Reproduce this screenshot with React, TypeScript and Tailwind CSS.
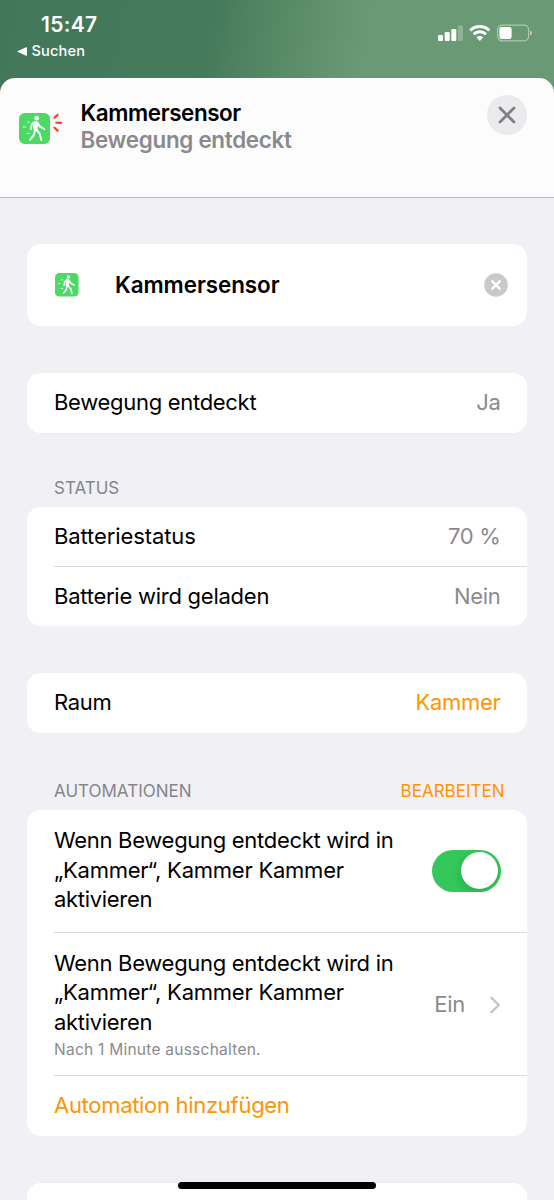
import React from 'react';

interface RowProps {
    label: React.ReactNode;
    children?: React.ReactNode;
}

/** Green motion-sensor tile with a walking figure. */
function MotionTile({ className }: { className?: string }) {
    return (
        <svg viewBox="0 0 93 93" className={className} fill="none" stroke="#fff" strokeLinecap="round" strokeLinejoin="round">
            <rect width="93" height="93" rx="17" fill="#4cd964" stroke="none" />
            <circle cx="53" cy="15.5" r="7" fill="#fff" stroke="none" />
            <path d="M45 27 L54 26 L57 33 L54 45 L55 52 L46 53 L44 45 Z" fill="#fff" strokeWidth="3" />
            <path d="M46 28 L38 34 L36 49" strokeWidth="5.5" />
            <path d="M56 29 L63 41 L76 48" strokeWidth="5.5" />
            <path d="M52 50 L62 62 L67 81" strokeWidth="6" />
            <path d="M48 53 L44 67 L33 80" strokeWidth="6" />
            <path d="M26 27h5M13 42h7M24 61h7" strokeWidth="3.5" strokeOpacity=".85" />
        </svg>
    );
}

function Card({ children, className = '' }: { children?: React.ReactNode; className?: string }) {
    return <div className={`mx-[27px] rounded-[14px] bg-white ${className}`}>{children}</div>;
}

function Row({ label, children }: RowProps) {
    return (
        <div className="flex h-[59.5px] items-center justify-between pr-[26.5px] pl-[27px]">
            <span>{label}</span>
            {children}
        </div>
    );
}

function Divider() {
    return <div className="-mt-px ml-[27px] h-px bg-[#d8d8da]" />;
}

function AutomationText() {
    return (
        <p className="leading-[29.4px]">
            Wenn Bewegung entdeckt wird in
            <br />
            <span className="tracking-[-0.24px]">„Kammer“, Kammer Kammer</span>
            <br />
            aktivieren
        </p>
    );
}

function StatusBar() {
    return (
        <div className="flex h-[78px] justify-between bg-[linear-gradient(100deg,#42775a_0%,#457a5a_38%,#5a8b68_52%,#6a9a75_66%,#6a9a75_100%)] text-white">
            <div className="pt-[11px]">
                <div className="ml-[41px] text-[21px] leading-[27px] font-semibold tracking-[0.3px]">15:47</div>
                <div className="mt-[4px] ml-[16.5px] flex items-center text-[14.6px] leading-[18px] font-medium tracking-[0.15px]">
                    <svg width="10" height="9" viewBox="0 0 10 9" className="mr-[5px]" fill="currentColor">
                        <path d="M0 4.5 9 .2Q10 0 10 1v7q0 1-1 .8Z" />
                    </svg>
                    Suchen
                </div>
            </div>
            <div className="mt-[24px] mr-[21.5px] flex gap-[5.5px]">
                <svg width="26" height="18" viewBox="0 0 26 18" fill="currentColor">
                    <rect x="0" y="11" width="5" height="6" rx="1.2" />
                    <rect x="6.7" y="8" width="5" height="9" rx="1.2" />
                    <rect x="13.3" y="5" width="5" height="12" rx="1.2" />
                    <rect x="20" y="1.5" width="5" height="15.5" rx="1.2" opacity=".25" />
                </svg>
                <svg width="22" height="18" viewBox="0 0 22 18" fill="none" stroke="currentColor" strokeWidth="3">
                    <path d="M1.2 6.4A13.8 13.8 0 0 1 20.4 6.4" />
                    <path d="M4.7 10.2A8.7 8.7 0 0 1 16.9 10.2" />
                    <path d="M7.3 13.2Q10.8 10.6 14.3 13.2L10.8 17Z" fill="currentColor" stroke="none" />
                </svg>
                <svg width="36" height="18" viewBox="0 0 36 18" fill="none">
                    <rect x=".6" y="1.2" width="31" height="15.6" rx="4.5" stroke="#fff" strokeOpacity=".45" strokeWidth="1.2" />
                    <rect x="2.4" y="3" width="12.2" height="12" rx="2.2" fill="#fff" />
                    <path d="M33 6.5q2 .7 2 2.5t-2 2.5Z" fill="#fff" fillOpacity=".5" />
                </svg>
            </div>
        </div>
    );
}

function SheetHeader() {
    return (
        <div className="-mt-[0.5px] flex h-[120px] items-start rounded-t-[15px] border-b border-[#bcbcc0] bg-[#fcfcfd]">
            <div className="mt-[35px] ml-[18.5px] flex w-[62px] shrink-0 items-start">
                <MotionTile className="size-[31px]" />
                <svg width="13" height="22" viewBox="0 0 13 22" className="ml-[2px]" fill="none" stroke="#ff3026" strokeWidth="2" strokeLinecap="round">
                    <path d="M2.4 4.8 5.7 1.8M4.2 9.8h5M2.4 14.6l3.3 3.2" />
                </svg>
            </div>
            <div className="pt-[21px] text-[22.4px] leading-[27px] font-semibold">
                <div className="tracking-[-0.4px]">Kammersensor</div>
                <div className="tracking-[-0.28px] text-[#8a8a8e]">Bewegung entdeckt</div>
            </div>
            <div className="mt-[17.5px] mr-[27px] ml-auto flex size-[40px] items-center justify-center rounded-full bg-[#ebebed]">
                <svg width="18" height="18" viewBox="0 0 18 18" stroke="#7f7f84" strokeWidth="2.8" strokeLinecap="round">
                    <path d="M2 2 16 16M16 2 2 16" />
                </svg>
            </div>
        </div>
    );
}

export default function App() {
    return (
        <div className="relative h-[1200px] w-[554px] overflow-hidden bg-[#f0f0f5] font-['Inter',sans-serif] text-[22px] tracking-[-0.3px] text-black">
            <div className="bg-[linear-gradient(90deg,#42775a,#42775a_50%,#6a9a75_50%)]">
                <StatusBar />
                <SheetHeader />
            </div>

            <Card className="mt-[46.5px] flex h-[82px] items-center pr-[19.5px] pl-[28px]">
                <MotionTile className="size-[23.5px]" />
                <span className="ml-[36.5px] text-[22.4px] font-semibold tracking-[-0.05px]">Kammersensor</span>
                <svg width="24" height="24" viewBox="0 0 24 24" className="ml-auto" strokeLinecap="round">
                    <circle cx="12" cy="12" r="11.8" fill="#c9c9cb" />
                    <path d="m8.3 8.3 7.4 7.4m0-7.4-7.4 7.4" stroke="#fff" strokeWidth="2.4" />
                </svg>
            </Card>

            <Card className="mt-[47px]">
                <Row label="Bewegung entdeckt">
                    <span className="text-[#8a8a8e]">Ja</span>
                </Row>
            </Card>

            <div className="mt-[44px] ml-[54px] h-[30.5px] text-[17px] leading-[22px] tracking-[0px] text-[#85858b]">STATUS</div>
            <Card>
                <Row label={<span className="tracking-[-0.1px]">Batteriestatus</span>}>
                    <span className="text-[#8a8a8e]">70 %</span>
                </Row>
                <Divider />
                <Row label={<span className="tracking-[-0.25px]">Batterie wird geladen</span>}>
                    <span className="text-[#8a8a8e]">Nein</span>
                </Row>
            </Card>

            <Card className="mt-[47px]">
                <Row label="Raum">
                    <span className="text-[#ff9500]">Kammer</span>
                </Row>
            </Card>

            <div className="mt-[47px] mr-[49.5px] ml-[54px] flex h-[30.5px] justify-between text-[17px] leading-[22px] tracking-[0px] text-[#85858b]">
                <span>AUTOMATIONEN</span>
                <span className="text-[#ff9500]">BEARBEITEN</span>
            </div>
            <Card>
                <div className="flex h-[123px] items-center justify-between pr-[26.5px] pb-[2px] pl-[27px]">
                    <AutomationText />
                    <div className="flex h-[42px] w-[68.5px] items-center justify-end overflow-hidden rounded-full bg-[#34c759] pr-[2.5px]">
                        <div className="size-[37px] rounded-full bg-white shadow-[-1px_3px_8px_rgba(0,0,0,0.15)]" />
                    </div>
                </div>
                <Divider />
                <div className="flex h-[143px] items-center pr-[26.5px] pl-[27px]">
                    <div>
                        <AutomationText />
                        <p className="mt-[3px] text-[15.5px] leading-[20px] tracking-[0.25px] text-[#8a8a8e]">Nach 1 Minute ausschalten.</p>
                    </div>
                    <span className="ml-auto text-[#8a8a8e]">Ein</span>
                    <svg width="12" height="18" viewBox="0 0 12 18" className="ml-[23.5px]" fill="none" stroke="#c4c4c7" strokeWidth="2.4" strokeLinecap="round" strokeLinejoin="round">
                        <path d="m2.5 1.8 7.2 7.2-7.2 7.2" />
                    </svg>
                </div>
                <Divider />
                <Row label={<span className="text-[#ff9500]">Automation hinzufügen</span>} />
            </Card>

            <Card className="mt-[47.5px] h-[60px]" />

            {/* Home indicator */}
            <div className="absolute bottom-[11px] left-[178px] h-[7px] w-[198px] rounded-full bg-black" />
        </div>
    );
}
